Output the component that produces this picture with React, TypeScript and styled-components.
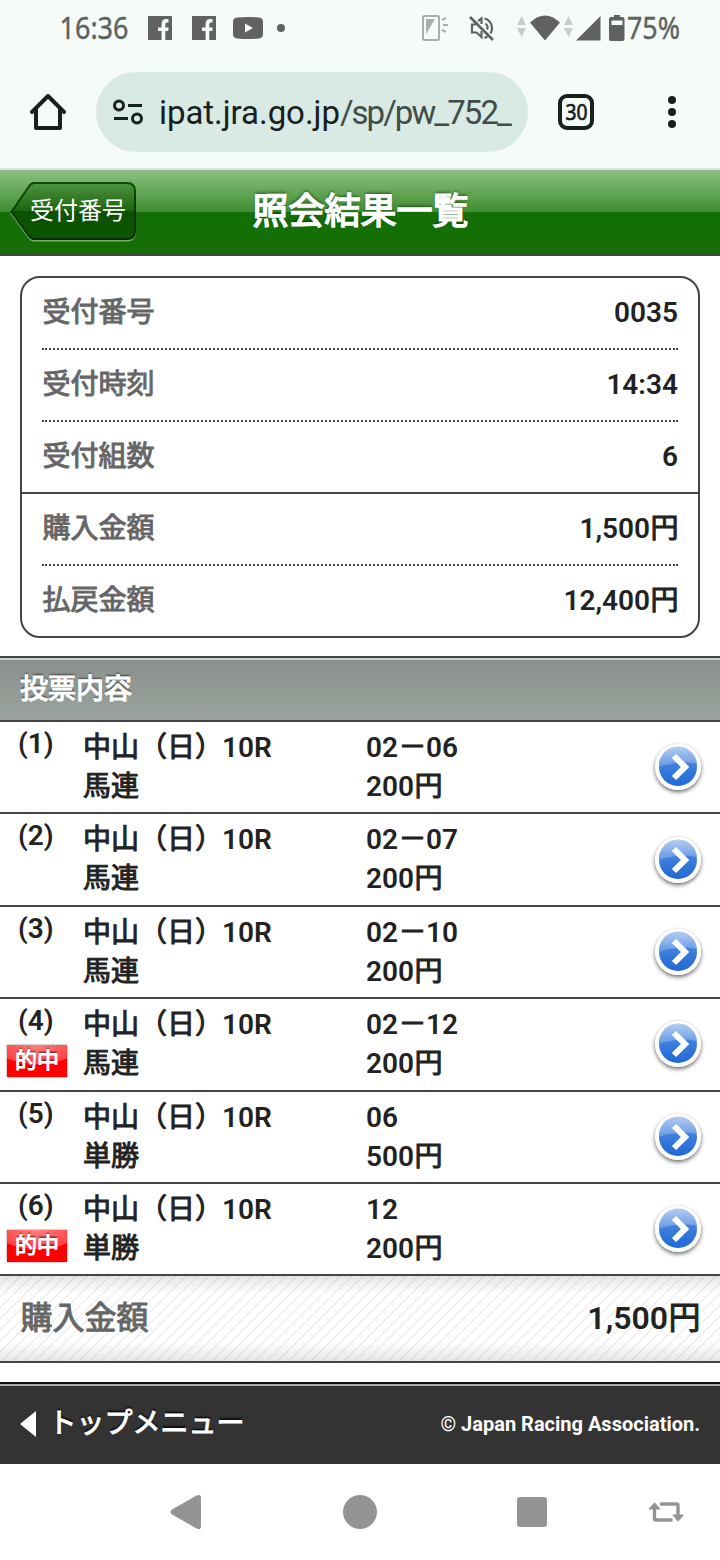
import React from "react";
import styled, { createGlobalStyle } from "styled-components";

const Global = createGlobalStyle`
  * { box-sizing: border-box; }
  body { margin: 0; background: #fff; }
  #root { width: 720px; }
`;

const Screen = styled.div`
  width: 720px;
  height: 1560px;
  display: flex;
  flex-direction: column;
  overflow: hidden;
  background: #fff;
  color: #222;
  font-family: Roboto, "Noto Sans CJK JP", sans-serif;
`;

const StatusBar = styled.div`
  height: 56px;
  flex: none;
  background: #f5fbf7;
  svg { display: block; }
`;

const Toolbar = styled.div`
  height: 114px;
  flex: none;
  display: flex;
  align-items: center;
  background: #f5fbf7;
  border-bottom: 2px solid #d9e5e0;
`;

const HomeSlot = styled.div`
  width: 96px;
  display: flex;
  justify-content: center;
`;

const AddressBar = styled.div`
  width: 432px;
  height: 80px;
  border-radius: 40px;
  background: #d9e9e3;
  display: flex;
  align-items: center;
  padding-left: 16px;
  svg { flex: none; }
`;

const Url = styled.div`
  margin-left: 15px;
  padding-top: 2px;
  font-size: 33px;
  line-height: 40px;
  letter-spacing: -1.95px;
  white-space: nowrap;
  color: #414c47;
`;
const Host = styled.span`
  color: #17201c;
  letter-spacing: -0.05px;
`;

const TabSlot = styled.div`
  width: 96px;
  display: flex;
  justify-content: center;
`;
const MenuSlot = styled(TabSlot)``;

const Header = styled.header`
  height: 86px;
  flex: none;
  display: grid;
  grid-template-columns: 242px 1fr 242px;
  align-items: center;
  border-bottom: 2px solid #444;
  background: linear-gradient(#8dc083 0, #3f8f31 41.5px, #137006 42px, #166d06 84px);
`;

const BackButton = styled.div`
  width: 128px;
  height: 62px;
  margin-left: 10px;
  display: grid;
  svg, span { grid-area: 1 / 1; }
`;
const BackLabel = styled.span`
  padding: 10px 0 0 20px;
  font-size: 24px;
  line-height: 40px;
  color: #fff;
  white-space: nowrap;
`;

/* Japanese glyphs are emboldened evenly from the regular weight. */
const Kanji = styled.span`
  font-weight: 400;
  -webkit-text-stroke: 1px currentColor;
  padding-left: 0.5px;
  margin-right: -0.5px;
`;

const Title = styled.h1`
  margin: 0;
  padding: 0 0 0 1px;
  text-align: center;
  font-size: 36px;
  line-height: 50px;
  font-weight: 400;
  -webkit-text-stroke: 1.5px currentColor;
  color: #fff;
  white-space: nowrap;
  text-shadow: 0 -2px 3px rgba(0, 0, 0, 0.5);
`;

const Summary = styled.section`
  margin: 20px 20px 18px;
  height: 362px;
  flex: none;
  border: 2px solid #444;
  border-radius: 20px;
`;

const SummaryGroup = styled.div<{ $divided?: boolean }>`
  padding: 0 20px;
  border-bottom: ${(p) => (p.$divided ? "2px solid #444" : "0")};
`;

const SummaryRow = styled.div`
  height: 72px;
  display: flex;
  align-items: center;
  justify-content: space-between;
  font-size: 28px;
  line-height: 40px;
  border-bottom: 2px dotted #444;
  &:last-child {
    height: 70px;
    border-bottom: 0;
  }
`;

const Label = styled(Kanji)`
  color: #666;
`;
const Value = styled.span`
  color: #222;
  font-weight: 600;
  white-space: nowrap;
`;

const SectionTitle = styled.h2`
  margin: 0;
  height: 66px;
  flex: none;
  padding: 6px 20px 0;
  border: solid #444;
  border-width: 2px 0;
  background: linear-gradient(#8a908b, #9aa39d);
  box-shadow: inset 0 2px 0 #c5d4cc;
  font-size: 28px;
  line-height: 52px;
  font-weight: 400;
  -webkit-text-stroke: 1.2px currentColor;
  color: #fff;
  text-shadow: 0 -2px 2px rgba(0, 0, 0, 0.5);
`;

const BetRow = styled.div`
  height: 92.4px;
  flex: none;
  display: grid;
  grid-template-columns: 82.5px 283.5px 1fr 84px;
  border-bottom: 2px solid #444;
  font-size: 28px;
  line-height: 39px;
  font-weight: 600;
  white-space: nowrap;
`;

const NumberCell = styled.div`
  display: flex;
  flex-direction: column;
  align-items: flex-start;
  padding: 2px 0 0 7px;
`;
const BetNumber = styled.span`
  margin-left: 11px;
`;
const HitBadge = styled.span`
  width: 60px;
  height: 32px;
  margin-top: 5px;
  background: radial-gradient(ellipse 70% 60% at 50% 0, #ff8080, #ff4040 98%, transparent 100%), #f00;
  box-shadow: 0 0 2px rgba(0, 0, 0, 0.5);
  text-align: center;
  font-size: 22px;
  line-height: 32px;
  font-weight: 400;
  -webkit-text-stroke: 1px currentColor;
  color: #fff;
  text-shadow: 0 -2px 1px rgba(0, 0, 0, 0.5);
`;
const BetCell = styled.div`
  padding-top: 6px;
`;
const Venue = styled(Kanji)`
  margin-right: -1px;
`;
const ArrowCell = styled.div`
  display: flex;
  align-items: center;
  justify-content: center;
`;

const Total = styled.div`
  height: 86.6px;
  flex: none;
  display: flex;
  align-items: center;
  justify-content: space-between;
  padding: 0 20px 2px;
  border-bottom: 2px solid #444;
  font-size: 32px;
  line-height: 44px;
  background:
    linear-gradient(rgba(0, 0, 0, 0.1), transparent 18px, transparent calc(100% - 18px), rgba(0, 0, 0, 0.1)),
    repeating-linear-gradient(135deg, #fff 0, #fff 6.2px, #e4e4e4 7px, #fff 7.8px);
`;

const Footer = styled.footer`
  height: 82px;
  margin-top: 19px;
  flex: none;
  display: flex;
  align-items: center;
  justify-content: space-between;
  padding: 0 20px;
  background: #333;
  border-top: 2px solid #111;
  box-shadow: inset 0 2px 0 #aaa;
  color: #fff;
`;
const TopMenu = styled.div`
  display: flex;
  align-items: center;
  gap: 12px;
  font-size: 28px;
  line-height: 40px;
  text-shadow: 0 -2px 2px #000;
`;
const Copyright = styled.small`
  font-size: 20px;
  font-weight: 700;
`;

const NavBar = styled.nav`
  height: 96px;
  flex: none;
  background: #fff;
  svg { display: block; }
`;

const summary = [
  [
    ["受付番号", "0035", ""],
    ["受付時刻", "14:34", ""],
    ["受付組数", "6", ""],
  ],
  [
    ["購入金額", "1,500", "円"],
    ["払戻金額", "12,400", "円"],
  ],
];

const bets = [
  { kind: "馬連", pick: ["02", "06"], amount: "200", hit: false },
  { kind: "馬連", pick: ["02", "07"], amount: "200", hit: false },
  { kind: "馬連", pick: ["02", "10"], amount: "200", hit: false },
  { kind: "馬連", pick: ["02", "12"], amount: "200", hit: true },
  { kind: "単勝", pick: ["06"], amount: "500", hit: false },
  { kind: "単勝", pick: ["12"], amount: "200", hit: true },
];

const FacebookIcon = ({ x }: { x: number }) => (
  <path
    transform={`translate(${x} 16)`}
    d="M0 0H24V24H17.3V15H20.2L20.6 11.4H17.3V8.5C17.3 7 18 6.4 19.3 6.4H20.5V3.2C20 3.1 19 3 18 3C15.3 3 13.6 4.7 13.6 8V11.4H10V15H13.6V24H0Z"
  />
);

const StatusIcons = () => (
  <svg width="720" height="56" fill="#606260" fontFamily="'Noto Sans', sans-serif">
    <text x="59.5" y="39" fontSize="31" stroke="#606260" strokeWidth="0.4" textLength="69" lengthAdjust="spacingAndGlyphs">16:36</text>
    <FacebookIcon x={148} />
    <FacebookIcon x={192} />
    <path
      fillRule="evenodd"
      d="M237 17.4Q248 16.6 259 17.4Q263 17.8 263 22V34Q263 38 259 38.4Q248 39.4 237 38.4Q233 38 233 34V22Q233 17.8 237 17.4ZM245 23.5V32.5L253 28Z"
    />
    <circle cx="281" cy="28" r="4" />
    <g fill="none" stroke="#a9aeaa" strokeWidth="2">
      <rect x="423" y="16" width="16" height="24" rx="1.5" />
      <path d="M442 20L446 18M443 25H448M442 30L446 32" />
    </g>
    <path d="M426 19H435L426 34Z" fill="#a9aeaa" />
    <g fill="none" stroke="#606260" strokeWidth="2.2">
      <path d="M470 17L493 40" strokeWidth="2.6" />
      <path d="M476 24.5H472V32.5H476.5L481.5 37V31M478 21.2L481.5 18.5V24M484.5 18.5C489 19.5 492 23.5 492 28C492 30 491.5 32 490.5 33.5M487.5 36.5L484.5 38M485.5 23.5C487.3 25 488 27.5 487 29.5" />
    </g>
    <path d="M521.5 16L526 25H517ZM521.5 37L526 28H517ZM568.5 16L573 25H564ZM568.5 37L573 28H564Z" fill="#c8cdc9" />
    <path d="M530 22.5Q545 8.5 560 22.5L545 40.5Z" />
    <path d="M600.5 16V40.5H576Z" />
    <path fillRule="evenodd" d="M614 15H620V17H622.5Q624.5 17 624.5 19V39Q624.5 41 622.5 41H611Q609 41 609 39V19Q609 17 611 17H614ZM611.5 20.5V25H622.5V20.5Z" />
    <text x="627" y="39" fontSize="31" stroke="#606260" strokeWidth="0.4" textLength="53" lengthAdjust="spacingAndGlyphs">75%</text>
  </svg>
);

const Arrow = () => (
  <svg width="56" height="60" viewBox="0 0 56 60">
    <defs>
      <linearGradient id="disc" x1="0" y1="0" x2="0" y2="1">
        <stop offset="0" stopColor="#5a92e2" />
        <stop offset="1" stopColor="#1f68d6" />
      </linearGradient>
      <linearGradient id="gloss" x1="0" y1="0" x2="0" y2="1">
        <stop offset="0" stopColor="#b4cdf2" />
        <stop offset="1" stopColor="#6397e4" />
      </linearGradient>
      <filter id="drop" x="-20%" y="-20%" width="140%" height="150%">
        <feDropShadow dx="0" dy="2" stdDeviation="2" floodColor="#000" floodOpacity="0.6" />
      </filter>
    </defs>
    <circle cx="28" cy="30" r="23" fill="#fff" filter="url(#drop)" />
    <circle cx="28" cy="30" r="19" fill="url(#disc)" />
    <path d="M9 30A19 19 0 0 1 47 27Q34 24.5 23 26.5Q14 27.8 9 30Z" fill="url(#gloss)" />
    <path d="M24 19L35 30L24 41" fill="none" stroke="#fff" strokeWidth="6" />
  </svg>
);

export default function App() {
  return (
    <>
      <Global />
      <Screen>
        <StatusBar>
          <StatusIcons />
        </StatusBar>
        <Toolbar>
          <HomeSlot>
            <svg width="40" height="40" fill="none" stroke="#17201c" strokeWidth="4" strokeLinecap="round" strokeLinejoin="round">
              <path d="M4 20L20 4L36 20M8 17V36H32V17" />
            </svg>
          </HomeSlot>
          <AddressBar>
            <svg width="32" height="32" fill="none" stroke="#17201c" strokeWidth="3">
              <circle cx="7" cy="9.5" r="4.5" />
              <circle cx="25" cy="22.5" r="4.5" />
              <path d="M16 9.5H30M2 22.5H16" />
            </svg>
            <Url>
              <Host>ipat.jra.go.jp</Host>/sp/pw_752_
            </Url>
          </AddressBar>
          <TabSlot>
            <svg width="36" height="36">
              <rect x="2" y="2" width="32" height="32" rx="7" fill="none" stroke="#17201c" strokeWidth="4" />
              <text x="7.5" y="26" fontSize="22" fontFamily="'Noto Sans', sans-serif" fill="#17201c" stroke="#17201c" strokeWidth="0.7" textLength="22" lengthAdjust="spacingAndGlyphs">30</text>
            </svg>
          </TabSlot>
          <MenuSlot>
            <svg width="8" height="32" fill="#17201c">
              <circle cx="4" cy="4" r="4" />
              <circle cx="4" cy="16" r="4" />
              <circle cx="4" cy="28" r="4" />
            </svg>
          </MenuSlot>
        </Toolbar>

        <Header>
          <BackButton>
            <svg width="128" height="62">
              <defs>
                <linearGradient id="back" x1="0" y1="0" x2="0" y2="1">
                  <stop offset="0" stopColor="#4f9340" />
                  <stop offset="0.5" stopColor="#1a6410" />
                  <stop offset="0.51" stopColor="#0b5200" />
                  <stop offset="1" stopColor="#0d5500" />
                </linearGradient>
                <linearGradient id="edge" x1="0" y1="0" x2="0" y2="1">
                  <stop offset="0" stopColor="#0c4b05" />
                  <stop offset="1" stopColor="#042c00" />
                </linearGradient>
              </defs>
              <path transform="translate(0 1.5)" d="M24 2H117Q125 2 125 10V50Q125 58 117 58H24Q21 58 18.5 54.5L1.5 31L18.5 6Q21 2 24 2Z" fill="none" stroke="#78ae6c" strokeWidth="2" />
              <path d="M24 2H117Q125 2 125 10V50Q125 58 117 58H24Q21 58 18.5 54.5L1.5 31L18.5 6Q21 2 24 2Z" fill="url(#back)" stroke="url(#edge)" strokeWidth="2" />
            </svg>
            <BackLabel>受付番号</BackLabel>
          </BackButton>
          <Title>照会結果一覧</Title>
        </Header>

        <Summary>
          {summary.map((group, i) => (
            <SummaryGroup key={i} $divided={i === 0}>
              {group.map(([label, value, unit]) => (
                <SummaryRow key={label}>
                  <Label>{label}</Label>
                  <Value>
                    {value}
                    {unit && <Kanji>{unit}</Kanji>}
                  </Value>
                </SummaryRow>
              ))}
            </SummaryGroup>
          ))}
        </Summary>

        <SectionTitle>投票内容</SectionTitle>
        {bets.map((bet, i) => (
          <BetRow key={i}>
            <NumberCell>
              <BetNumber>({i + 1})</BetNumber>
              {bet.hit && <HitBadge>的中</HitBadge>}
            </NumberCell>
            <BetCell>
              <Venue>中山（日）</Venue>10R
              <br />
              <Kanji>{bet.kind}</Kanji>
            </BetCell>
            <BetCell>
              {bet.pick[0]}
              {bet.pick[1] && (
                <>
                  <Kanji>－</Kanji>
                  {bet.pick[1]}
                </>
              )}
              <br />
              {bet.amount}
              <Kanji>円</Kanji>
            </BetCell>
            <ArrowCell>
              <Arrow />
            </ArrowCell>
          </BetRow>
        ))}
        <Total>
          <Label>購入金額</Label>
          <Value>
            1,500<Kanji>円</Kanji>
          </Value>
        </Total>

        <Footer>
          <TopMenu>
            <svg width="16" height="28">
              <path d="M16 1V27L0 14Z" fill="#fff" />
            </svg>
            <Kanji>トップメニュー</Kanji>
          </TopMenu>
          <Copyright>© Japan Racing Association.</Copyright>
        </Footer>

        <NavBar>
          <svg width="720" height="96" fill="#949494">
            <path d="M172 45.5L196.5 31.5Q201 29.5 201 34V62Q201 66.5 196.5 64.5L172 50.5Q169 48 172 45.5Z" />
            <circle cx="360" cy="48" r="17" />
            <rect x="517" y="33" width="30" height="30" rx="3" />
            <g fill="none" stroke="#949494" strokeWidth="3.4">
              <path d="M654.5 44V54.5Q654.5 56 656 56H672.5M660 40H676.5Q678 40 678 41.5V52" />
            </g>
            <path d="M649 44.5L654.5 38.3L660 44.5V45.5H649ZM672.5 51L678 57.7L683.5 51.5V50.5H672.5Z" />
          </svg>
        </NavBar>
      </Screen>
    </>
  );
}
